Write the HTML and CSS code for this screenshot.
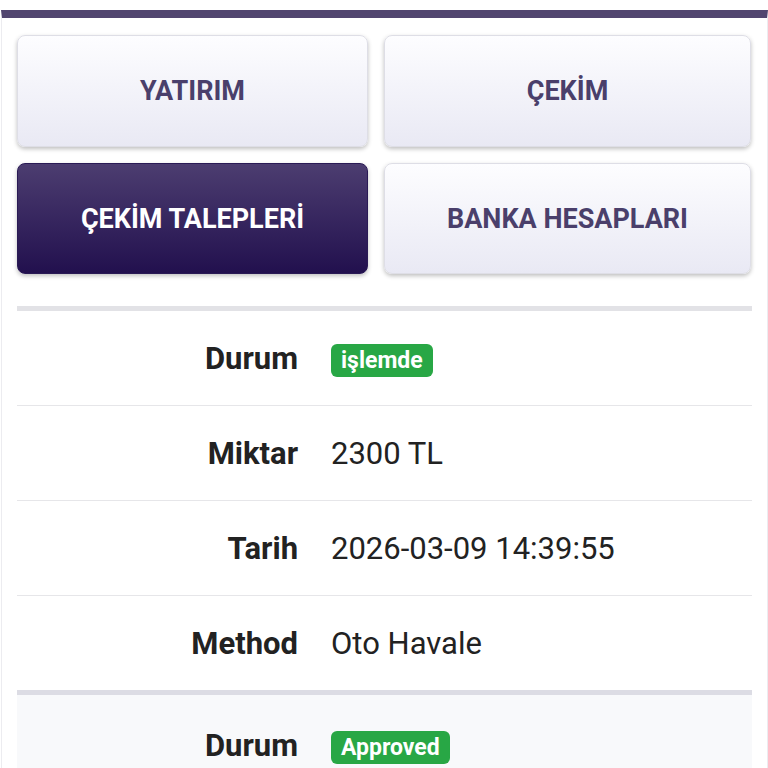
FILE: index.html
```html
<!DOCTYPE html>
<html lang="tr">
<head>
    <meta charset="UTF-8">
    <meta name="viewport" content="width=device-width, initial-scale=1.0">
    <title>Çekim Talepleri</title>
    <link rel="stylesheet" href="styles.css">
</head>
<body>

<div class="container">
    <!-- menü butonları -->
    <div class="menu">
        <div class="button">YATIRIM</div>
        <div class="button">ÇEKİM</div>
        <div class="button active">ÇEKİM TALEPLERİ</div>
        <div class="button">BANKA HESAPLARI</div>
    </div>

    <!-- talep listesi -->
    <div class="request">
        <div class="row">
            <div class="label">Durum</div>
            <div class="value"><span class="badge">işlemde</span></div>
        </div>
        <div class="row">
            <div class="label">Miktar</div>
            <div class="value">2300 TL</div>
        </div>
        <div class="row">
            <div class="label">Tarih</div>
            <div class="value">2026-03-09 14:39:55</div>
        </div>
        <div class="row">
            <div class="label">Method</div>
            <div class="value">Oto Havale</div>
        </div>
    </div>

    <div class="request alt">
        <div class="row">
            <div class="label">Durum</div>
            <div class="value"><span class="badge">Approved</span></div>
        </div>
    </div>
</div>

</body>
</html>
```

FILE: styles.css
```css
body {
    font-family: Roboto, "Noto Sans", sans-serif;
    margin: 0;
    padding: 10px 0 0 0;
    background-color: #fff;
    color: #222;
    height: 768px;
    overflow: hidden;
}
.container {
    margin-left: 1px;
    border-left: 1px solid #ececf0;
    border-right: 1px solid #ececf0;
    border-top: 8px solid #51456f; /* üst mor çizgi */
    padding: 17px 15px 0 15px;
}
.menu {
    display: grid;
    grid-template-columns: 351px 367px;
    grid-template-rows: 112px 111px;
    gap: 16px;
    margin-bottom: 32px;
}
.button {
    display: flex;
    align-items: center;
    justify-content: center;
    background: linear-gradient(to bottom, #fdfdff, #e9e9f4);
    border: 1px solid #dedee6;
    border-radius: 8px;
    box-shadow: 0 2px 4px rgba(0, 0, 0, 0.25);
    color: #4a3f6b;
    font-size: 27px;
    font-weight: bold;
    cursor: pointer;
}
.button.active {
    background: linear-gradient(to bottom, #4c3d70, #22104e);
    border-color: #2a1a55;
    color: #fff;
}
.request {
    border-top: 5px solid #e2e2e6;
}
.request.alt {
    background-color: #f8f9fb;
    border-top-color: #dcdce4;
    padding-top: 3px;
}
.row {
    display: grid;
    grid-template-columns: 281px 1fr;
    column-gap: 33px;
    align-items: center;
    height: 94px;
    border-bottom: 1px solid #e6e6e9;
    font-size: 31px;
}
.request .row:last-child {
    border-bottom: none;
}
.label {
    text-align: right;
    font-weight: bold;
    color: #222;
}
.value {
    color: #222;
}
.badge {
    display: inline-block;
    background-color: #28a745;
    color: #fff;
    font-size: 23px;
    font-weight: bold;
    padding: 3px 10px;
    border-radius: 6px;
    vertical-align: middle;
}
```
